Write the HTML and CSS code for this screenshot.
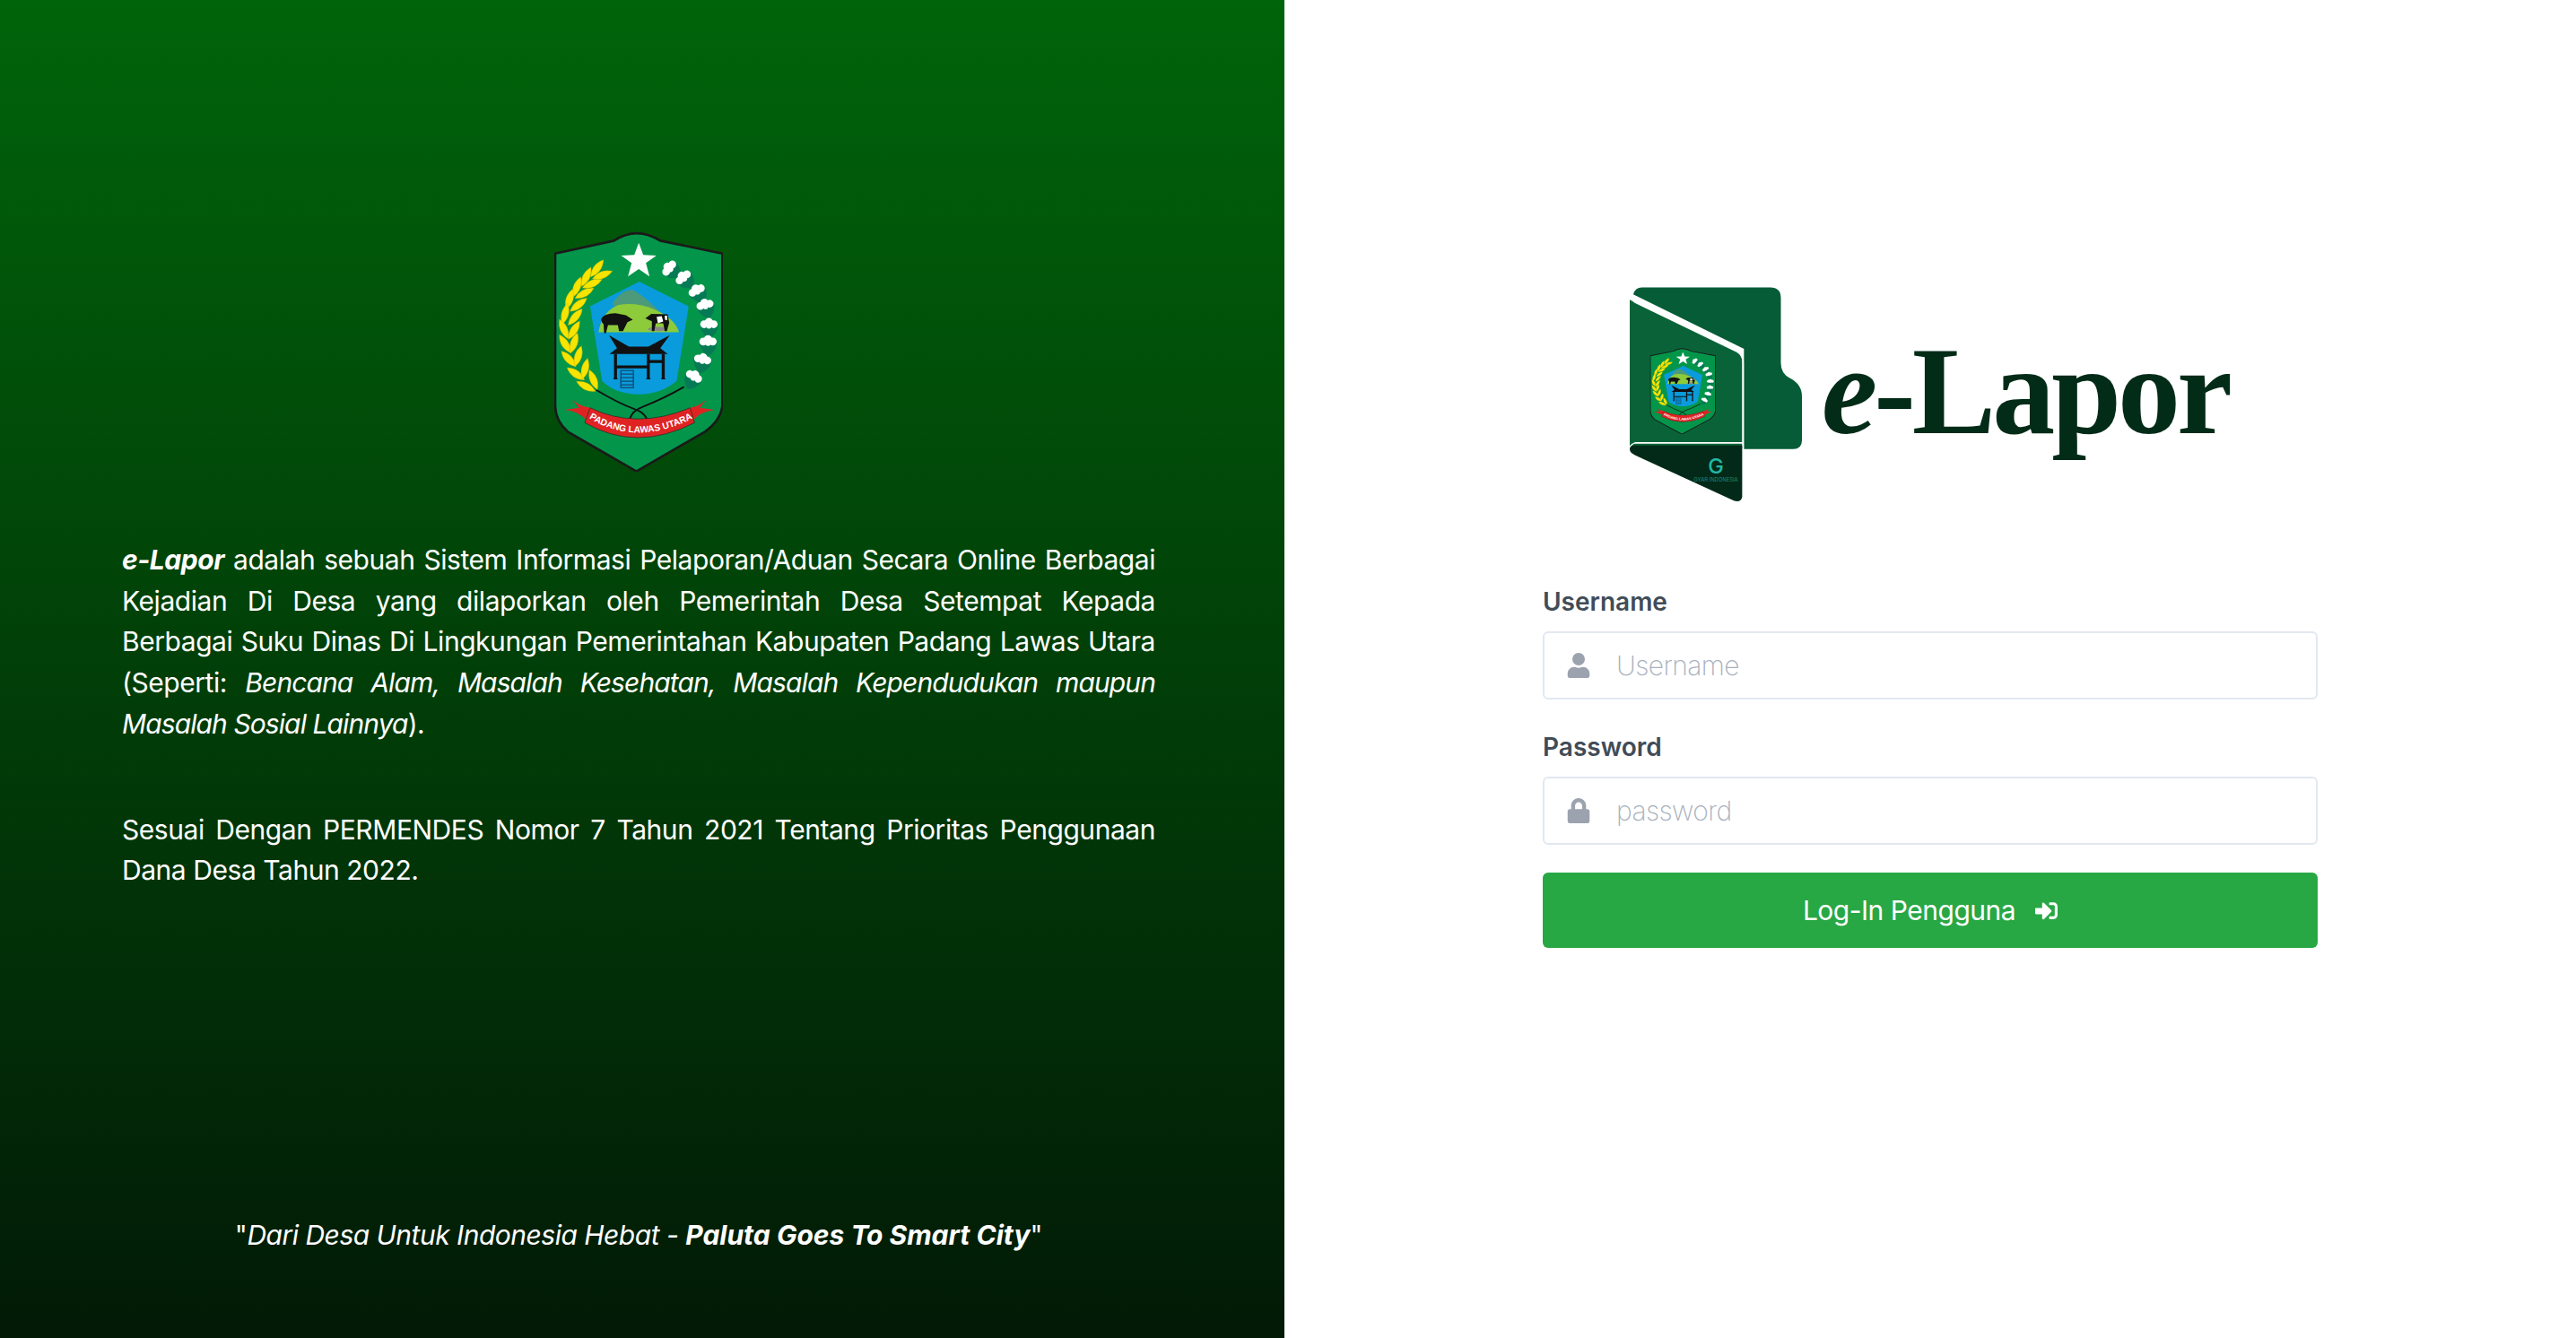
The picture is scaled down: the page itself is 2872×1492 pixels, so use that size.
FILE: index.html
```html
<!DOCTYPE html>
<html lang="id">
<head>
<meta charset="utf-8">
<title>e-Lapor</title>
<link rel="stylesheet" href="styles.css">
</head>
<body>
<svg class="defs" aria-hidden="true">
  <defs>
    <path id="leaf" d="M-36 0Q0-24 36 0Q0 24-36 0Z"/>
    <g id="boll">
      <path fill="#067a55" d="M-30 4Q-24 34 2 48Q30 30 30 4Z"/>
      <circle cx="-16" cy="0" r="13" fill="#fff"/>
      <circle cx="0" cy="-7" r="14" fill="#fff"/>
      <circle cx="16" cy="0" r="13" fill="#fff"/>
      <circle cx="0" cy="6" r="9" fill="#fff"/>
    </g>
    <g id="crest-art">
      <path fill="#03964a" stroke="#1a1a1a" stroke-width="8" d="M88 128L285 85Q360 35 440 85L648 128V640Q640 690 590 725L360 858L130 725Q90 690 88 640Z"/>
      <polygon fill="#fff" points="368,92 383,133 427,135 392,160 404,205 368,180 332,205 344,160 309,135 353,133"/>
      <path fill="#0a9bdc" d="M370 222L535 305L495 555Q440 600 370 600Q290 600 245 555L205 305Z"/>
      <path fill="#4c9a7a" d="M280 295Q310 250 345 250Q375 260 440 325L300 330Z"/>
      <path fill="#8ecb3a" d="M233 392Q245 320 300 300Q360 290 420 315Q490 345 503 392Z"/>
      <path fill="#111" d="M243 345Q250 330 290 328L325 335L348 350L330 358L315 388H302L298 368H265L258 395H252L250 365Q240 355 243 345Z"/>
      <ellipse cx="432" cy="381" rx="34" ry="7" fill="#8a8a8a"/>
      <path fill="#111" d="M390 345L410 330L465 332L470 360L462 388H455L450 362H425L420 388H412L412 355Z"/>
      <path fill="#fff" d="M428 340L445 338L450 356L432 362ZM455 336L463 336L463 352L456 350Z"/>
      <path fill="#111" d="M268 402L335 440H400L472 402L440 445L465 465H270L295 445Z"/>
      <path fill="none" stroke="#111" stroke-width="10" d="M290 465V545M400 465V545M450 465V545M290 508H400M400 490H450"/>
      <path fill="#111" d="M282 550Q290 535 298 550ZM392 550Q400 535 408 550ZM442 550Q450 535 458 550Z"/>
      <path fill="none" stroke="#0e4a70" stroke-width="4" d="M308 520H350V578H308ZM308 532H350M308 544H350M308 556H350M308 568H350"/>
      <path fill="none" stroke="#111" stroke-width="6" d="M225 585Q300 630 355 650Q385 660 395 682M520 575Q450 615 385 640Q345 655 338 682"/>
      <g fill="#f7e400" stroke="#c9a800" stroke-width="1">
        <use href="#leaf" transform="translate(228 178) rotate(-53)"/>
        <use href="#leaf" transform="translate(246 200) rotate(-21)"/>
        <use href="#leaf" transform="translate(192 206) rotate(-64)"/>
        <use href="#leaf" transform="translate(212 229) rotate(-23)"/>
        <use href="#leaf" transform="translate(161 240) rotate(-69)"/>
        <use href="#leaf" transform="translate(186 261) rotate(-28)"/>
        <use href="#leaf" transform="translate(136 281) rotate(-72)"/>
        <use href="#leaf" transform="translate(166 300) rotate(-38)"/>
        <use href="#leaf" transform="translate(121 330) rotate(-76)"/>
        <use href="#leaf" transform="translate(155 341) rotate(-49)"/>
        <use href="#leaf" transform="translate(117 381) rotate(66)"/>
        <use href="#leaf" transform="translate(151 385) rotate(-58)"/>
        <use href="#leaf" transform="translate(121 431) rotate(58)"/>
        <use href="#leaf" transform="translate(151 428) rotate(-71)"/>
        <use href="#leaf" transform="translate(133 481) rotate(47)"/>
        <use href="#leaf" transform="translate(165 472) rotate(-73)"/>
        <use href="#leaf" transform="translate(157 531) rotate(35)"/>
        <use href="#leaf" transform="translate(188 514) rotate(-76)"/>
        <use href="#leaf" transform="translate(191 573) rotate(27)"/>
        <use href="#leaf" transform="translate(216 551) rotate(68)"/>
      </g>
      <use href="#boll" transform="translate(470 177) rotate(-50)"/>
      <use href="#boll" transform="translate(517 208) rotate(-40)"/>
      <use href="#boll" transform="translate(562 252) rotate(-28)"/>
      <use href="#boll" transform="translate(590 300) rotate(-14)"/>
      <use href="#boll" transform="translate(603 365)"/>
      <use href="#boll" transform="translate(600 423)"/>
      <use href="#boll" transform="translate(582 483) rotate(12)"/>
      <use href="#boll" transform="translate(553 540) rotate(30)"/>
      <path fill="#df2323" d="M145 617Q170 640 205 645L190 685Q165 655 118 652L168 645ZM595 617Q570 640 540 645L552 685Q575 658 622 652L572 645Z"/>
      <path fill="#df2323" stroke="#222" stroke-width="2" d="M205 645Q360 720 540 645L555 695Q360 795 187 695Z"/>
      <path id="ribbon-line" fill="none" d="M205 682Q360 775 545 682"/>
      <text class="crest-text"><textPath href="#ribbon-line" startOffset="50%" text-anchor="middle">PADANG LAWAS UTARA</textPath></text>
    </g>
  </defs>
</svg>
<main class="page">
  <section class="intro">
    <svg class="crest" viewBox="85 55 565 803" aria-hidden="true"><use href="#crest-art"/></svg>
    <div class="copy">
      <p><strong><em>e-Lapor</em></strong> adalah sebuah Sistem Informasi Pelaporan/Aduan Secara Online Berbagai Kejadian Di Desa yang dilaporkan oleh Pemerintah Desa Setempat Kepada Berbagai Suku Dinas Di Lingkungan Pemerintahan Kabupaten Padang Lawas Utara (Seperti: <em class="copy-em">Bencana Alam, Masalah Kesehatan, Masalah Kependudukan maupun Masalah Sosial Lainnya</em>).</p>
      <p>Sesuai Dengan PERMENDES Nomor 7 Tahun 2021 Tentang Prioritas Penggunaan Dana Desa Tahun 2022.</p>
    </div>
    <p class="motto">"<em class="motto-em">Dari Desa Untuk Indonesia Hebat - <strong class="motto-strong">Paluta Goes To Smart City</strong></em>"</p>
  </section>
  <section class="login">
    <div class="brand">
      <svg class="folder" viewBox="0 0 196 244" aria-hidden="true">
        <path fill="#055c36" d="M14 0H160Q172 0 172 12V86Q172 98 182 103Q196 110 196 124V174Q196 184 186 184H130V70L4 8Q6 0 14 0Z"/>
        <path fill="#0a6338" d="M0 14L122 73Q128 77 128 85V183H0Z"/>
        <path fill="none" stroke="#fff" stroke-width="1.6" d="M1 10Q2 15 8 18L122 73Q129 77 129 85V184"/>
        <path fill="none" stroke="#fff" stroke-width="1.6" d="M0 184Q0 179 6 177H129"/>
        <path fill="#032a18" d="M5 180H128V238Q127 245 119 243L6 191Q0 188 0 184Q0 180 5 180Z"/>
        <svg x="23" y="69" width="75" height="98" viewBox="85 55 565 803" preserveAspectRatio="none"><use href="#crest-art"/></svg>
        <text class="folder-g" x="98" y="212" text-anchor="middle">G</text>
        <text class="folder-small" x="98" y="221" text-anchor="middle">GYAR INDONESIA</text>
      </svg>
      <span class="wordmark"><i class="wordmark-e">e</i>-Lapor</span>
    </div>
    <form class="form">
      <label class="label" for="user">Username</label>
      <div class="field">
        <svg class="field-icon" viewBox="0 0 448 512" aria-hidden="true"><path d="M224 256a128 128 0 1 0 0-256 128 128 0 0 0 0 256zm90 32h-17a174 174 0 0 1-146 0h-17C60 288 0 348 0 422v42c0 27 21 48 48 48h352c27 0 48-21 48-48v-42c0-74-60-134-134-134z"/></svg>
        <input id="user" class="input" type="text" placeholder="Username">
      </div>
      <label class="label" for="pass">Password</label>
      <div class="field">
        <svg class="field-icon" viewBox="0 0 448 512" aria-hidden="true"><path d="M400 224h-24v-72C376 68 308 0 224 0S72 68 72 152v72H48c-27 0-48 21-48 48v192c0 27 21 48 48 48h352c27 0 48-21 48-48V272c0-27-21-48-48-48zm-104 0H152v-72c0-40 32-72 72-72s72 32 72 72v72z"/></svg>
        <input id="pass" class="input" type="text" placeholder="password">
      </div>
      <button class="submit" type="button">Log-In Pengguna
        <svg class="submit-icon" viewBox="0 0 512 512" aria-hidden="true"><path d="M416 448h-84c-7 0-12-5-12-12v-40c0-7 5-12 12-12h84c18 0 32-14 32-32V160c0-18-14-32-32-32h-84c-7 0-12-5-12-12V76c0-7 5-12 12-12h84c53 0 96 43 96 96v192c0 53-43 96-96 96zm-47-201L201 79c-15-15-41-4-41 17v96H24c-13 0-24 11-24 24v96c0 13 11 24 24 24h136v96c0 21 26 32 41 17l168-168c9-10 9-24 0-34z"/></svg>
      </button>
    </form>
  </section>
</main>
</body>
</html>
```
FILE: styles.css
```css
* { box-sizing: border-box; }
html, body { margin: 0; height: 100%; }
body { font-family: Inter, "Noto Sans", sans-serif; color: #fff; background: #fff; }
.defs { width: 0; height: 0; display: block; position: absolute; }
.page { display: grid; grid-template-columns: 1432px 1fr; height: 1492px; }
.intro {
  background: linear-gradient(180deg, #00640a 0%, #021a06 100%);
  display: flex; flex-direction: column; align-items: center;
  padding: 258px 144px 0 136px;
}
.crest { width: 188px; height: 268px; display: block; margin-bottom: 76px; }
.crest-text { font: 700 31px "Liberation Sans", sans-serif; fill: #fff; }
.copy { width: 100%; display: flex; flex-direction: column; gap: 72px; }
.copy p { margin: 0; font-size: 30px; line-height: 45.7px; text-align: justify; letter-spacing: -0.45px; }
.copy-em { letter-spacing: -0.9px; }
.motto { margin: 361px 0 0; font-size: 30px; line-height: 45px; white-space: nowrap; letter-spacing: -0.3px; }
.motto-em { letter-spacing: -0.5px; }
.motto-strong { letter-spacing: 0; }
.login { display: flex; flex-direction: column; align-items: center; padding-top: 320px; color: #414c57; }
.brand { display: flex; align-items: flex-start; width: 670px; gap: 22px; margin-bottom: 92px; }
.folder { width: 192px; height: 240px; display: block; flex: none; }
.folder-g { font: 500 24px Inter, sans-serif; fill: #21b8a4; }
.folder-small { font: 400 6px Inter, sans-serif; fill: #1b8d80; }
.wordmark { font-family: "Liberation Serif", serif; font-weight: 700; font-size: 140px; line-height: 1; color: #032c18; padding-top: 46px; letter-spacing: -4px; white-space: nowrap; }
.wordmark-e { font-style: italic; }
.form { width: 864px; display: flex; flex-direction: column; }
.label { font-size: 28px; line-height: 38px; font-weight: 600; color: #414c57; margin-bottom: 14px; }
.field { position: relative; margin-bottom: 34px; }
.field-icon { position: absolute; left: 27px; top: 24px; width: 26px; height: 28px; fill: #9ca3af; }
.input { display: block; width: 100%; height: 76px; border: 2px solid #e2e8f0; border-radius: 6px; padding: 0 0 0 80px; background: #fff; font: 200 30px Inter, sans-serif; letter-spacing: -0.6px; outline: 0; }
.input::placeholder { color: #a9b1bd; opacity: 1; }
.submit { height: 84px; margin-top: -3px; border: 0; border-radius: 6px; background: #28a745; color: #fff; font: 400 30px Inter, sans-serif; letter-spacing: -0.5px; display: flex; align-items: center; justify-content: center; gap: 22px; }
.submit-icon { width: 25px; height: 25px; fill: #fff; }
```
